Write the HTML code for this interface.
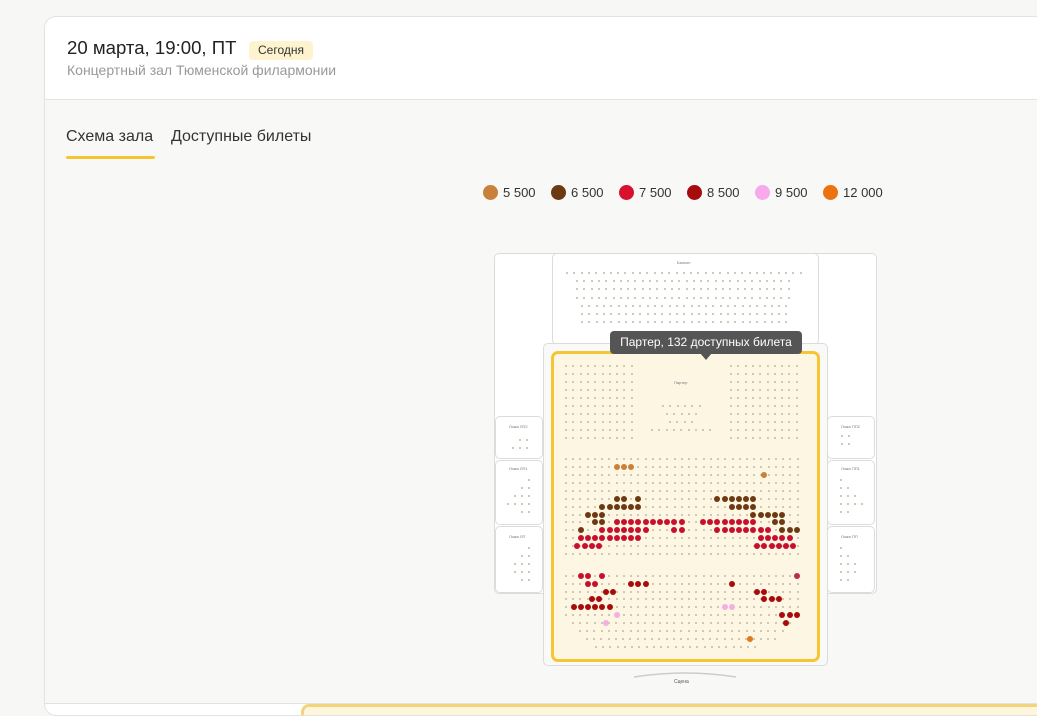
<!DOCTYPE html>
<html><head><meta charset="utf-8">
<style>
*{margin:0;padding:0;box-sizing:border-box}
body{width:1037px;height:711px;overflow:hidden;background:#f7f7f5;font-family:"Liberation Sans","Noto Sans CJK SC",sans-serif;position:relative}
.a{position:absolute}
.card{left:44px;top:16px;width:1010px;height:700px;border:1px solid #e2e2e0;border-radius:12px;background:#f8f8f6;overflow:hidden}
.head{left:0;top:0;width:100%;height:83px;background:#fff;border-bottom:1px solid #e4e4e2}
.box{background:#fff;border:1px solid #dcdcdc;border-radius:5px}
.d{position:absolute;width:2px;height:2px;border-radius:1px;background:#c2b9a6}
.s{position:absolute;width:6px;height:6px;border-radius:50%}
.lg{position:absolute;top:185px;font-size:13px;color:#333;display:flex;align-items:center}
.lg i{display:inline-block;width:15px;height:15px;border-radius:50%;margin-right:5px}
.sm{position:absolute;font-size:4px;color:#777}
</style></head><body>
<div class="a card">
 <div class="a head">
  <div class="a" style="left:22px;top:20px;font-size:18.6px;color:#222">20 марта, 19:00, ПТ</div>
  <div class="a" style="left:204px;top:24px;height:19px;padding:0 9px;background:#fdf3cf;border-radius:4px;font-size:12px;line-height:19px;color:#333">Сегодня</div>
  <div class="a" style="left:22px;top:45px;font-size:14px;color:#999">Концертный зал Тюменской филармонии</div>
 </div>
 <div class="a" style="left:21px;top:111px;font-size:16px;color:#333">Схема зала</div>
 <div class="a" style="left:126px;top:111px;font-size:16px;color:#333">Доступные билеты</div>
 <div class="a" style="left:21px;top:139px;width:89px;height:3px;background:#f5c533;border-radius:2px"></div>
 <div class="a" style="left:0;top:686px;width:100%;height:20px;background:#fff;border-top:1px solid #e2e2e0"></div>
 <div class="a" style="left:256px;top:687px;width:760px;height:20px;background:#fef6dc;border:3px solid #f2d57a;border-radius:8px"></div>
</div>

<div class="lg" style="left:483px"><i style="background:#c8813a"></i>5 500</div>
<div class="lg" style="left:551px"><i style="background:#6b3a12"></i>6 500</div>
<div class="lg" style="left:619px"><i style="background:#d7112e"></i>7 500</div>
<div class="lg" style="left:687px"><i style="background:#a80b0b"></i>8 500</div>
<div class="lg" style="left:755px"><i style="background:#f7a9ec"></i>9 500</div>
<div class="lg" style="left:823px"><i style="background:#ec7210"></i>12 000</div>

<div class="a box" style="left:494px;top:253px;width:383px;height:341px"></div>
<div class="a box" style="left:552px;top:253px;width:267px;height:92px"></div>
<div class="a box" style="left:495px;top:416px;width:48px;height:43px"></div>
<div class="a box" style="left:495px;top:460px;width:48px;height:65px"></div>
<div class="a box" style="left:495px;top:526px;width:48px;height:67px"></div>
<div class="a box" style="left:827px;top:416px;width:48px;height:43px"></div>
<div class="a box" style="left:827px;top:460px;width:48px;height:65px"></div>
<div class="a box" style="left:827px;top:526px;width:48px;height:67px"></div>
<div class="a box" style="left:543px;top:343px;width:285px;height:323px;background:#f9f9f7"></div>
<div class="a" style="left:551px;top:351px;width:269px;height:311px;background:#fdf6e3;border:3px solid #f5c533;border-radius:7px"></div>
<div class="sm" style="left:677px;top:260px">Балкон</div>
<div class="sm" style="left:674px;top:380px">Партер</div>
<div class="sm" style="left:509px;top:424px">Ложа ЛП2</div>
<div class="sm" style="left:509px;top:466px">Ложа ЛП1</div>
<div class="sm" style="left:509px;top:534px">Ложа ЛП</div>
<div class="sm" style="left:841px;top:424px">Ложа ПП2</div>
<div class="sm" style="left:841px;top:466px">Ложа ПП1</div>
<div class="sm" style="left:841px;top:534px">Ложа ПП</div>
<svg class="a" style="left:630px;top:668px" width="110" height="12"><path d="M4 9 Q55 1 106 9" stroke="#ccc" stroke-width="1.5" fill="none"/></svg>
<div class="sm" style="left:674px;top:679px;font-size:5px;color:#555">Сцена</div>
<div id="dots"></div>
<div class="a" style="left:610px;top:331px;width:192px;height:23px;background:#555;border-radius:4px;color:#fff;font-size:12px;line-height:23px;text-align:center">Партер, 132 доступных билета</div>
<div class="a" style="left:700px;top:353px;width:0;height:0;border-left:6px solid transparent;border-right:6px solid transparent;border-top:7px solid #555"></div>
<script>
var h='',D=document.getElementById('dots');
function d(x,y){h+='<div class="d" style="left:'+(x-1)+'px;top:'+(y-1)+'px"></div>'}
function s(x,y,c){h+='<div class="s" style="left:'+(x-3)+'px;top:'+(y-3)+'px;background:'+c+'"></div>'}
var st=7.3;
for(var r=0;r<7;r++){var y=273+r*8.2;var x0=r==0?567:(r<4?577:582),x1=r==0?802:(r<4?792:790);for(var x=x0;x<=x1;x+=st)d(x,y);}
for(var r=0;r<10;r++){var y=366+r*8;for(var c=0;c<10;c++)d(566+c*st,y);for(var c=0;c<10;c++)d(731+c*st,y);
 if(r==5)for(var c=0;c<6;c++)d(663+c*st,y);if(r==6)for(var c=0;c<5;c++)d(667+c*st,y);if(r==7)for(var c=0;c<4;c++)d(670+c*st,y);if(r==8)for(var c=0;c<9;c++)d(652+c*st,y);}
var R=[459,466.7,474.7,482.7,490.7,498.7,506.7,514.7,522.3,530.3,538.3,546.3,554.3,575.7,583.7,591.7,599.3,607.3,615.3,623,631,639,646.7];
R.forEach(function(y,i){var a=566,b=803;if(i>=19){a=566+(i-18)*7;b=803-(i-18)*7}if(i==22){a=596;b=760}for(var x=a;x<=b+0.1;x+=7.24)d(x,y)});
[[520,440],[527,440],[513,448],[520,448],[527,448]].forEach(function(p){d(p[0],p[1])});
[[529,480],[522,488],[529,488],[515,496],[522,496],[529,496],[508,504],[515,504],[522,504],[529,504],[522,512],[529,512]].forEach(function(p){d(p[0],p[1]);});
[[529,548],[522,556],[529,556],[515,564],[522,564],[529,564],[515,572],[522,572],[529,572],[522,580],[529,580]].forEach(function(p){d(p[0],p[1]);});
[[842,436],[849,436],[842,444],[849,444]].forEach(function(p){d(p[0],p[1])});
[[841,480],[841,488],[848,488],[841,496],[848,496],[855,496],[841,504],[848,504],[855,504],[862,504],[841,512],[848,512]].forEach(function(p){d(p[0],p[1]);});
[[841,548],[841,556],[848,556],[841,564],[848,564],[855,564],[841,572],[848,572],[855,572],[841,580],[848,580]].forEach(function(p){d(p[0],p[1]);});
var O='#c8813a',B='#6b3a12',Rd='#c8102e',DR='#a80b0b',P='#f2b0e4',OR='#e07a1a';
var L=[[50,[380,402,424],O],[74,[822],O],
[146,[380,402,445,682,704,726,748,769,790],B],
[170,[337,359,380,402,424,445,726,748,769,790],B],
[194,[294,316,337,790,812,834,855,877],B],
[217,[316,337,855,877],B],[217,[380,402,424,445,467,489,510,532,553,575,640,661,682,704,726,748,769,790],Rd],
[241,[272,877,899,920],B],[241,[337,359,380,402,424,445,467,553,575,682,704,726,748,769,790,812,834],Rd],
[265,[272,294,316,337,359,380,402,424,445,812,834,855,877,899],Rd],
[289,[262,284,305,327,801,823,845,866,888,910],Rd],
[377,[272,294,337],Rd],[377,[920],'#c02a4a'],
[401,[294,316],Rd],[401,[424,445,467,726],DR],
[425,[348,370,801,823],DR],[448,[305,327,823,845,866],DR],
[472,[251,272,294,316,337,359],DR],[472,[704,726],P],
[496,[380],P],[496,[877,899,920],DR],[519,[348],P],[519,[888],DR],[567,[780],OR]];
L.forEach(function(l){l[1].forEach(function(z){s(490+z/3,450+l[0]/3,l[2])})});
D.innerHTML=h;
</script>
</body></html>
